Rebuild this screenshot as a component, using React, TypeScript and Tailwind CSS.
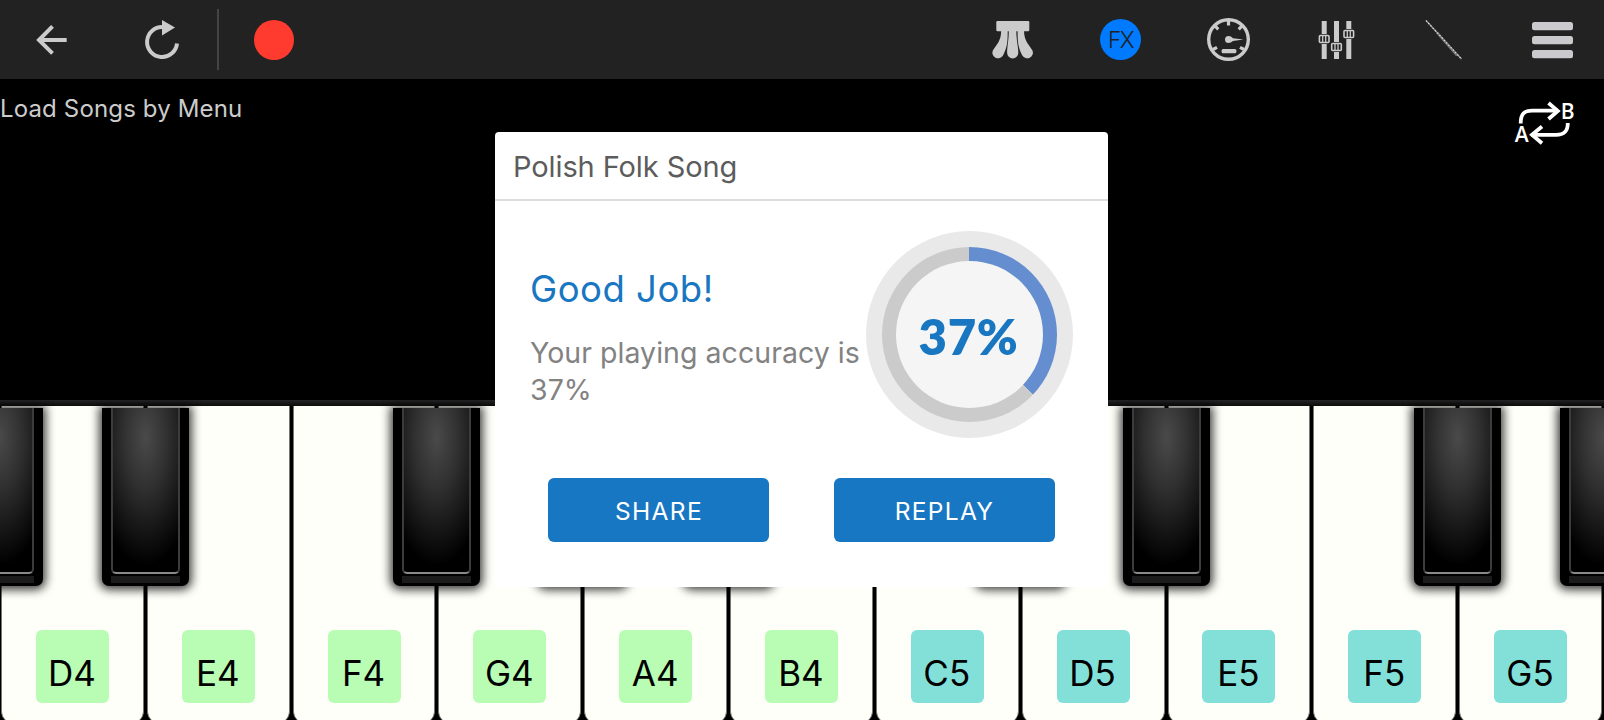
import { ReactNode } from 'react'

interface PianoKey {
  note: string
  octave: 4 | 5
  // black key sitting on the left edge of this white key
  sharp?: boolean
}

const keys: PianoKey[] = [
  { note: 'D', octave: 4, sharp: true },
  { note: 'E', octave: 4, sharp: true },
  { note: 'F', octave: 4 },
  { note: 'G', octave: 4, sharp: true },
  { note: 'A', octave: 4, sharp: true },
  { note: 'B', octave: 4, sharp: true },
  { note: 'C', octave: 5 },
  { note: 'D', octave: 5, sharp: true },
  { note: 'E', octave: 5, sharp: true },
  { note: 'F', octave: 5 },
  { note: 'G', octave: 5, sharp: true }
]

const octaveColors = {
  4: 'bg-[#b9fdb5]',
  5: 'bg-[#82e0d9]'
}

function ToolButton({ label, children }: { label: string; children: ReactNode }) {
  return (
    <button aria-label={label} className="flex h-[79px] w-[108px] shrink-0 items-center justify-center">
      {children}
    </button>
  )
}

function Icon({ children }: { children: ReactNode }) {
  return (
    <svg width="64" height="63" viewBox="0 0 64 63" fill="none">
      {children}
    </svg>
  )
}

function BackIcon() {
  return (
    <Icon>
      <path d="M44.7 32H18M30.5 18.3 17 32 30.5 45.3" stroke="#cbcbcb" strokeWidth="4" />
    </Icon>
  )
}

function RestartIcon() {
  return (
    <Icon>
      <path d="M33 19A15 15 0 1 0 47 35.5" stroke="#cbcbcb" strokeWidth="4" />
      <path d="M32 12 45 19.5 32 27.5Z" fill="#cbcbcb" />
    </Icon>
  )
}

function KeyboardIcon() {
  return (
    <Icon>
      <g fill="#cbcbcb">
        <rect x="15.3" y="13" width="33" height="10.2" rx="1.2" />
        <path d="M20.2 22H26.7C26.7 32 26.7 39 22 47.5A5.7 5.7 0 0 1 11.8 42.5C16 36 20.2 33 20.2 22Z" />
        <path d="M27.8 22H35.3C35.3 33 37.3 38 37.3 44.8A5.6 5.6 0 0 1 26.1 44.8C26.1 38 27.8 33 27.8 22Z" />
        <path d="M36.6 22H43C43 33 47.5 36 51.5 42.5A5.7 5.7 0 0 1 41.3 47.5C36.6 39 36.6 32 36.6 22Z" />
      </g>
    </Icon>
  )
}

function GaugeIcon() {
  return (
    <Icon>
      <circle cx="31.5" cy="31.5" r="19.8" stroke="#cbcbcb" strokeWidth="3.4" />
      <path
        d="M31.5 13V17.5M18.2 18.2 21.3 21.3M44.8 18.2 41.7 21.3M16 41.5 20 39.3M47 41.5 43 39.3"
        stroke="#cbcbcb"
        strokeWidth="3.2"
      />
      <path d="M31.5 28A3.5 3.5 0 1 0 31.5 35Q34 35 36 33L46.5 31.5 36 30.3Q34 28 31.5 28Z" fill="#cbcbcb" />
      <rect x="24.6" y="41" width="14.8" height="4.2" rx="1.5" fill="#cbcbcb" />
    </Icon>
  )
}

function Fader({ x, y }: { x: number; y: number }) {
  return (
    <g>
      <rect x={x - 2.5} y="13" width="5" height="38" fill="#cbcbcb" />
      <rect x={x - 6} y={y - 5} width="12" height="10" fill="#222222" />
      <rect x={x - 4.8} y={y - 3.5} width="9.6" height="7" rx="1" stroke="#cbcbcb" strokeWidth="1.6" />
      <path d={`M${x - 1.5} ${y - 3}V${y + 3}M${x + 1.5} ${y - 3}V${y + 3}`} stroke="#cbcbcb" strokeWidth="1.3" />
    </g>
  )
}

function MixerIcon() {
  return (
    <Icon>
      <Fader x={19.2} y={31} />
      <Fader x={31.5} y={39} />
      <Fader x={43.8} y={26} />
    </Icon>
  )
}

function FluteIcon() {
  return (
    <Icon>
      <path d="M13 12.5 48.5 51" stroke="#8d8d8d" strokeWidth="1.4" />
      <path d="M24 24.5 44 47.5" stroke="#777777" strokeWidth="2.4" />
      <path d="M13 12.5 48.5 51" stroke="#e4e4e4" strokeWidth="1.1" strokeDasharray="1.5 1.8" />
    </Icon>
  )
}

function MenuIcon() {
  return (
    <Icon>
      <g fill="#c9c9ce">
        <rect x="11" y="14" width="41" height="8.2" rx="2.5" />
        <rect x="11" y="28" width="41" height="8.2" rx="2.5" />
        <rect x="11" y="42" width="41" height="8.2" rx="2.5" />
      </g>
    </Icon>
  )
}

function LoopIcon() {
  return (
    <svg width="70" height="60" viewBox="0 -8 70 60" fill="none" className="font-['Open_Sans',sans-serif]">
      <g stroke="#ffffff" strokeWidth="3.8">
        <path d="M10.7 25.5C10.7 16 14 12.7 22 12.7H48" />
        <path d="M38.5 5 47.8 12.9 38.5 21" />
        <path d="M57.8 25C57.8 33.5 54 36.8 46 36.8H21" />
        <path d="M32 28.5 22 36.8 32 45.3" />
      </g>
      <text x="4.8" y="44.3" fontSize="21" fontWeight="600" fill="#ffffff">A</text>
      <text x="50.8" y="21" fontSize="21" fontWeight="600" fill="#ffffff">B</text>
    </svg>
  )
}

function Toolbar() {
  return (
    <header className="flex h-[79px] shrink-0 items-center justify-between bg-[#222222]">
      <div className="flex items-center">
        <ToolButton label="Back"><BackIcon /></ToolButton>
        <ToolButton label="Restart"><RestartIcon /></ToolButton>
        <div className="mr-px ml-px h-[61px] w-[2px] bg-[#444444]" />
        <ToolButton label="Record">
          <span className="size-10 rounded-full bg-[#ff3b30]" />
        </ToolButton>
      </div>
      <div className="-mr-[3px] flex items-center">
        <ToolButton label="Keyboard"><KeyboardIcon /></ToolButton>
        <ToolButton label="Effects">
          <span className="mr-px flex size-[41px] items-center justify-center rounded-full bg-[#007aff] pt-[2px] text-[22.5px] leading-none font-light tracking-[-1.5px] text-[#222222]">
            FX
          </span>
        </ToolButton>
        <ToolButton label="Metronome"><GaugeIcon /></ToolButton>
        <ToolButton label="Mixer"><MixerIcon /></ToolButton>
        <ToolButton label="Instrument"><FluteIcon /></ToolButton>
        <ToolButton label="Menu"><MenuIcon /></ToolButton>
      </div>
    </header>
  )
}

function BlackKey() {
  return (
    <div className="absolute top-[2px] -left-[44px] z-10 h-[178px] w-[87px] rounded-b-[7px] bg-black px-[9px] shadow-[0_1px_10px_3px_rgba(0,0,0,0.75)]">
      <div className="h-[166px] rounded-b-[5px] border-x-2 border-b-2 border-x-[#3c3c3c] border-b-[#8a8a8a] bg-[radial-gradient(ellipse_85%_78%_at_50%_18%,#4a4a4a_0%,#303030_40%,#141414_75%,#000000_100%)]" />
      <div className="mt-[2px] h-[7px] bg-[#1b1b1b]" />
    </div>
  )
}

function Keyboard() {
  return (
    <div className="flex h-[317px] shrink-0 bg-black">
      {keys.map(({ note, octave, sharp }) => (
        <div key={note + octave} className="relative flex flex-1 flex-col pr-[2px] pl-px">
          {sharp && <BlackKey />}
          <div className="flex flex-1 items-end justify-center rounded-b-[12px] border-x border-[#77776f] bg-[#fffffa] pb-[20px]">
            <div
              className={`flex h-[73px] w-[73px] items-end justify-center rounded-md pr-px pb-[9px] text-[35px] leading-[42px] text-black ${octaveColors[octave]}`}
            >
              {note}{octave}
            </div>
          </div>
        </div>
      ))}
      <div className="relative w-0">
        <BlackKey />
      </div>
    </div>
  )
}

function AccuracyDial({ percent }: { percent: number }) {
  return (
    <div className="flex size-[207px] shrink-0 items-center justify-center rounded-full bg-[#e9e9e9]">
      <div
        className="flex size-[175px] items-center justify-center rounded-full"
        style={{ background: `conic-gradient(#648ed0 ${percent}%, #cbcbcb ${percent}%)` }}
      >
        <div className="flex size-[147px] items-center justify-center rounded-full bg-[#f5f5f5] pt-[3px] pr-[2px] font-['Lato',sans-serif] text-[49px] leading-none font-extrabold tracking-[0.7px] text-[#1976c1]">
          {percent}%
        </div>
      </div>
    </div>
  )
}

function ResultDialog() {
  return (
    <div className="absolute top-[132px] left-[495px] z-20 flex h-[455px] w-[613px] flex-col rounded-t-[4px] bg-white">
      <h1 className="flex h-[69px] items-center border-b-2 border-[#dddddd] pt-[2px] pl-[18px] text-[29px] tracking-[-0.1px] text-[#5c5c5c]">
        Polish Folk Song
      </h1>
      <div className="flex h-[267px] items-center justify-between pr-[35px] pl-[35px]">
        <div className="whitespace-nowrap">
          <h2 className="text-[36.5px] leading-[44px] tracking-[0.5px] text-[#1976c1]">Good Job!</h2>
          <p className="mt-[23px] -mb-[5px] text-[28.5px] leading-[37px] tracking-[0.04px] text-[#828282]">
            Your playing accuracy is
            <br />
            37%
          </p>
        </div>
        <AccuracyDial percent={37} />
      </div>
      <div className="mt-[10px] flex justify-between px-[53px]">
        <button className="h-16 w-[221px] rounded-md bg-[#1877c2] pt-[2px] pl-px text-[24.5px] tracking-[1.3px] text-white">
          SHARE
        </button>
        <button className="h-16 w-[221px] rounded-md bg-[#1877c2] pt-[2px] text-[24.5px] tracking-[1.3px] text-white">
          REPLAY
        </button>
      </div>
    </div>
  )
}

export default function App() {
  return (
    <div className="relative flex h-[720px] w-[1604px] flex-col overflow-hidden bg-black font-['Inter',sans-serif]">
      <Toolbar />
      <div className="flex h-[321px] shrink-0 items-start justify-between pt-[15px]">
        <p className="text-[24px] leading-[30px] tracking-[0.15px] text-[#cccccc]">Load Songs by Menu</p>
        <div className="-mt-1 mr-6">
          <LoopIcon />
        </div>
      </div>
      <div className="h-[6px] shrink-0 bg-linear-to-b from-[#262628] to-[#0c0c0c]" />
      <Keyboard />
      <ResultDialog />
    </div>
  )
}
